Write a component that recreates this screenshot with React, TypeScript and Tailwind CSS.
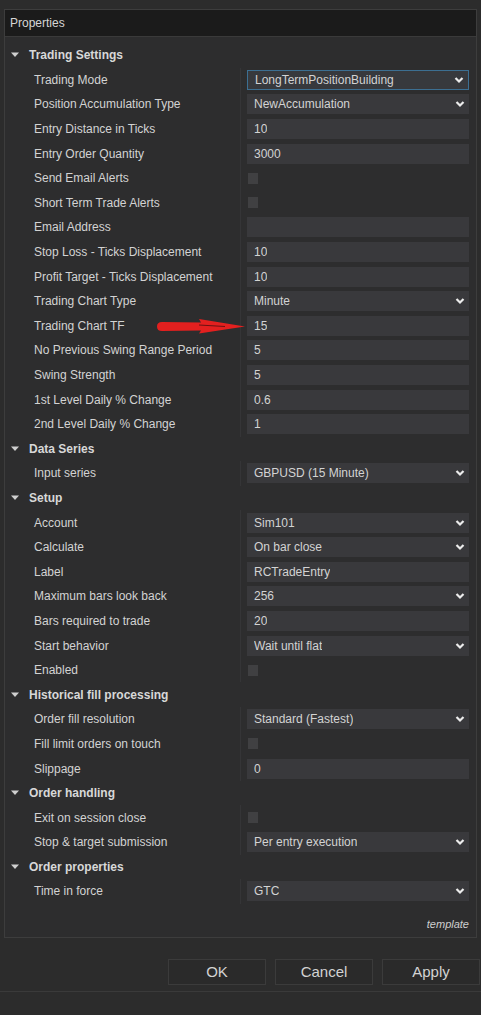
import React from "react";

type Prop =
  | { label: string; kind: "select"; value: string; focused?: boolean }
  | { label: string; kind: "text"; value: string }
  | { label: string; kind: "check" };

type Section = { title: string; props: Prop[] };

const sections: Section[] = [
  {
    title: "Trading Settings",
    props: [
      { label: "Trading Mode", kind: "select", value: "LongTermPositionBuilding", focused: true },
      { label: "Position Accumulation Type", kind: "select", value: "NewAccumulation" },
      { label: "Entry Distance in Ticks", kind: "text", value: "10" },
      { label: "Entry Order Quantity", kind: "text", value: "3000" },
      { label: "Send Email Alerts", kind: "check" },
      { label: "Short Term Trade Alerts", kind: "check" },
      { label: "Email Address", kind: "text", value: "" },
      { label: "Stop Loss - Ticks Displacement", kind: "text", value: "10" },
      { label: "Profit Target - Ticks Displacement", kind: "text", value: "10" },
      { label: "Trading Chart Type", kind: "select", value: "Minute" },
      { label: "Trading Chart TF", kind: "text", value: "15" },
      { label: "No Previous Swing Range Period", kind: "text", value: "5" },
      { label: "Swing Strength", kind: "text", value: "5" },
      { label: "1st Level Daily % Change", kind: "text", value: "0.6" },
      { label: "2nd Level Daily % Change", kind: "text", value: "1" },
    ],
  },
  {
    title: "Data Series",
    props: [{ label: "Input series", kind: "select", value: "GBPUSD (15 Minute)" }],
  },
  {
    title: "Setup",
    props: [
      { label: "Account", kind: "select", value: "Sim101" },
      { label: "Calculate", kind: "select", value: "On bar close" },
      { label: "Label", kind: "text", value: "RCTradeEntry" },
      { label: "Maximum bars look back", kind: "select", value: "256" },
      { label: "Bars required to trade", kind: "text", value: "20" },
      { label: "Start behavior", kind: "select", value: "Wait until flat" },
      { label: "Enabled", kind: "check" },
    ],
  },
  {
    title: "Historical fill processing",
    props: [
      { label: "Order fill resolution", kind: "select", value: "Standard (Fastest)" },
      { label: "Fill limit orders on touch", kind: "check" },
      { label: "Slippage", kind: "text", value: "0" },
    ],
  },
  {
    title: "Order handling",
    props: [
      { label: "Exit on session close", kind: "check" },
      { label: "Stop & target submission", kind: "select", value: "Per entry execution" },
    ],
  },
  {
    title: "Order properties",
    props: [{ label: "Time in force", kind: "select", value: "GTC" }],
  },
];

const Chevron = () => (
  <svg width="10" height="8" viewBox="0 0 10 8" className="shrink-0">
    <polyline points="1.5,2 5,5.5 8.5,2" fill="none" stroke="#ececec" strokeWidth="2.2" />
  </svg>
);

const Caret = () => (
  <svg width="8" height="6" viewBox="0 0 8 6" className="shrink-0">
    <polygon points="0,0.5 8,0.5 4,5" fill="#cfcfcf" />
  </svg>
);

// hand-drawn red marker pointing at the TF value
const RedArrow = () => (
  <svg
    className="absolute left-[148px] top-[-8px] pointer-events-none"
    width="94"
    height="17"
    viewBox="0 0 94 17"
  >
    <path d="M9 4 L48 4.5 L46 1 L92 8.5 L46 15.5 L48 12.5 L9 13 Q4 13 4 8.5 Q4 4 9 4 Z" fill="#e3201f" />
    <path d="M46 7 L72 8.5" stroke="#6a1212" strokeWidth="1" />
  </svg>
);

const Value = ({ p }: { p: Prop }) => {
  if (p.kind === "check") {
    return <div className="w-[10px] h-[11px] bg-[#404042] ml-[1px]" />;
  }
  const focused = p.kind === "select" && p.focused;
  return (
    <div
      className={`h-[20px] flex items-center justify-between pl-[7px] pr-[4px] ${
        focused ? "bg-[#37393d] border border-[#3c6f92]" : "bg-[#39393c]"
      }`}
    >
      <span className="truncate">{p.value}</span>
      {p.kind === "select" && <Chevron />}
    </div>
  );
};

export default function App() {
  return (
    <div className="w-[481px] h-[1015px] bg-[#2c2c2c] pt-[9px] text-[12px] text-[#d3d3d3] font-['Liberation_Sans',Arial,sans-serif] overflow-hidden">
      <div className="ml-[4px] w-[473px] border border-[#3d3d3d] bg-[#2d2d2e]">
        <div className="h-[27px] bg-[#1b1b1b] border-b border-[#3a3a3a] flex items-center px-[5px] text-[#d6d6d6]">
          Properties
        </div>

        <div className="pt-[6px]">
          {sections.map((s) => (
            <div key={s.title}>
              <div className="h-[24.6px] flex items-center pl-[6px] gap-[10px] font-bold text-[#d8d8d8]">
                <Caret />
                <span>{s.title}</span>
              </div>
              {s.props.map((p) => (
                <div key={p.label} className="h-[24.6px] flex items-center relative">
                  <div className="w-[235px] pl-[29px] truncate">{p.label}</div>
                  <div className="flex-1 h-full flex items-center border-l border-[#353537] pl-[6px] pr-[7px]">
                    <div className="w-full">
                      <Value p={p} />
                    </div>
                  </div>
                  {p.label === "Trading Chart TF" && (
                    <div className="absolute left-0 top-1/2">
                      <RedArrow />
                    </div>
                  )}
                </div>
              ))}
            </div>
          ))}
          <div className="h-[33px] pt-[12px] flex justify-end pr-[7px] italic text-[11px] text-[#cfcfcf]">
            template
          </div>
        </div>
      </div>

      <div className="mt-[21px] flex justify-end gap-[9px] pr-[1px]">
        {["OK", "Cancel", "Apply"].map((b) => (
          <button
            key={b}
            className="w-[98px] h-[26px] border border-[#3b3b3b] bg-[#2a2a2a] text-[15px] text-[#d3d3d3]"
          >
            {b}
          </button>
        ))}
      </div>
      <div className="mt-[6px] border-t border-[#3a3a3a]" />
    </div>
  );
}
